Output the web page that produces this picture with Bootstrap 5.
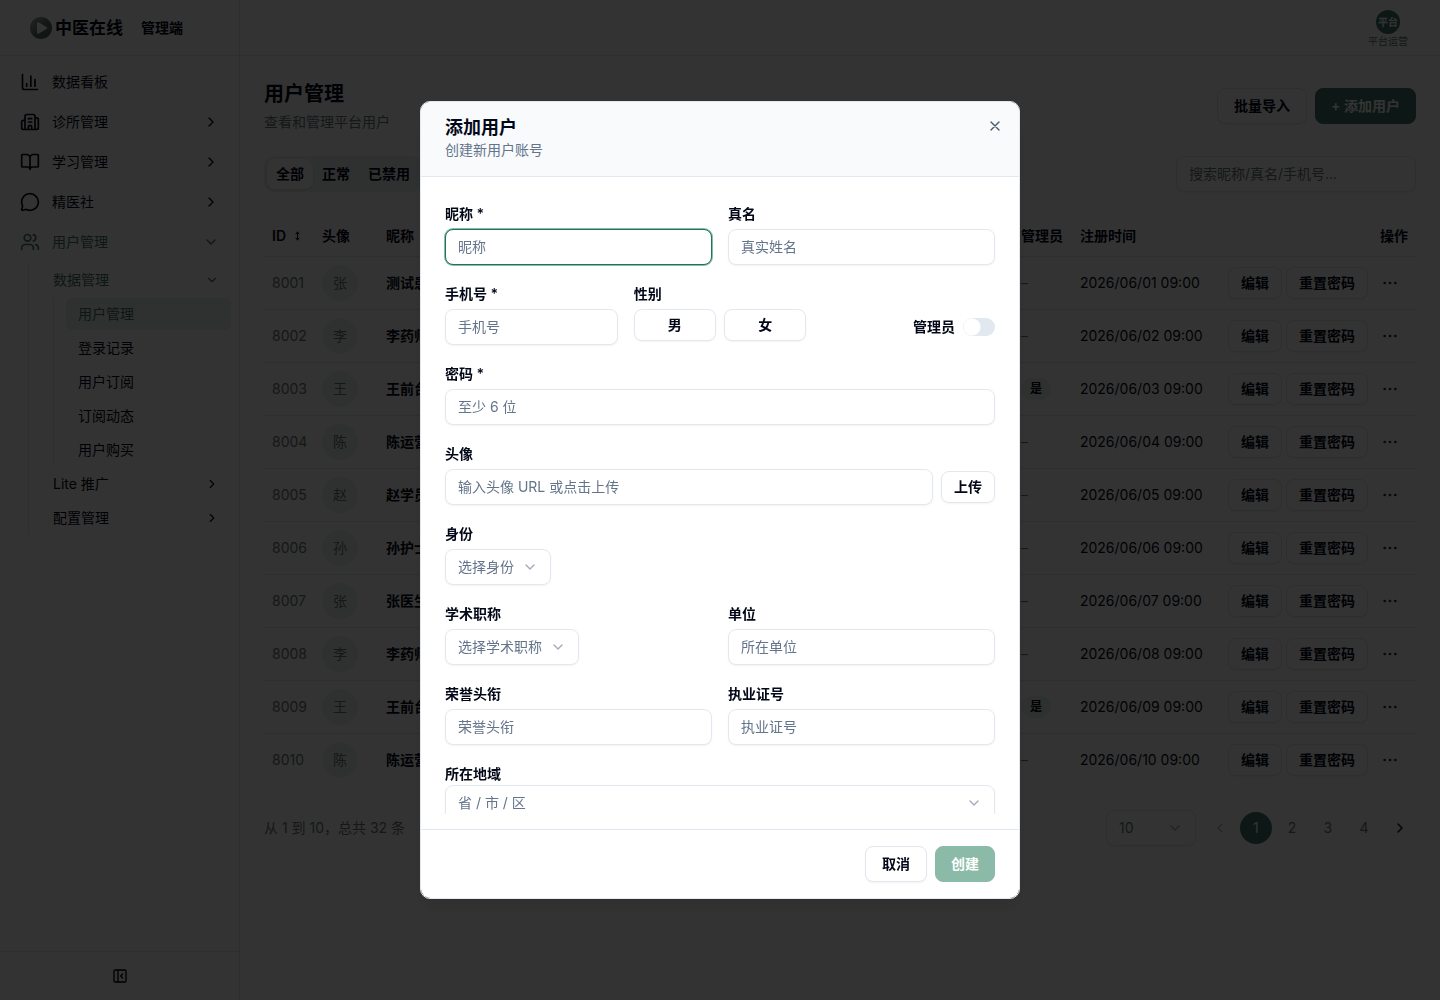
<!DOCTYPE html>
<html lang="zh-CN">
<head>
<meta charset="utf-8">
<meta name="viewport" content="width=device-width, initial-scale=1">
<title>用户管理 - 中医在线</title>
<link href="https://cdn.jsdelivr.net/npm/bootstrap@5.3.0/dist/css/bootstrap.min.css" rel="stylesheet">
<style>
:root{--ink:#020817;--soft:#64748b;--line:#e2e8f0;--tint:#eff6f4;--brand:#1b7755;--chev:url("data:image/svg+xml,%3Csvg xmlns='http://www.w3.org/2000/svg' viewBox='0 0 24 24' fill='none' stroke='%2364748b' stroke-opacity='.6' stroke-width='2' stroke-linecap='round' stroke-linejoin='round'%3E%3Cpath d='m6 9 6 6 6-6'/%3E%3C/svg%3E")}
body{font-family:Inter,"Noto Sans CJK SC",sans-serif;font-size:14px;line-height:20px;color:var(--ink);background:#fff;overflow:hidden}
.shell{--brand:#417568;--soft:#667876;--line:#dfe4e4;--tint:#ebf3f1}
a{color:inherit;text-decoration:none}
svg{flex:none;display:block}
.ico{fill:none;stroke:currentColor;stroke-width:2;stroke-linecap:round;stroke-linejoin:round}
.strong-text{font-weight:600}
.soft{color:var(--soft)}
.side{width:240px;border-right:1px solid var(--line)}
.side-head,.top-head{height:56px;border-bottom:1px solid var(--line)}
.side-head{padding-left:30px}
.brand-name{font-size:17px;font-weight:600;margin:0 18px 0 3px}
.side-foot{height:49px;border-top:1px solid var(--line)}
.menu{padding:6px 8px}
.menu-row{height:40px;padding:0 12px;gap:12px}
.menu-on{color:var(--brand)}
.sub-a{margin:2px 0 0 20px;border-left:1px solid var(--line)}
.sub-b{margin-left:24px;border-left:1px solid var(--line)}
.sub-list{row-gap:2px}
.sub-row{height:32px;padding:0 12px 0 24px;border-radius:6px}
.sub-b .sub-row{margin-left:12px;padding-left:12px}
.sub-sel{background:var(--tint);color:var(--brand)}
.top-head{padding-top:3px}
.me-pic{width:24px;height:24px;background:var(--brand);color:#fff;font-size:10px}
.me-name{font-size:10px;line-height:15px}
.page{padding:24px}
.title-lg{font-size:20px;line-height:28px;font-weight:600;margin:0 0 4px}
.btn{--bs-btn-font-size:14px;--bs-btn-line-height:20px;--bs-btn-border-radius:8px;--bs-btn-font-weight:600;--bs-btn-padding-y:7px;--bs-btn-padding-x:16px;white-space:nowrap}
.btn-line{--bs-btn-color:var(--ink);--bs-btn-bg:#fff;--bs-btn-border-color:var(--line);box-shadow:0 1px 2px rgba(0,0,0,.05)}
.btn-main{--bs-btn-color:#fff;--bs-btn-bg:var(--brand);--bs-btn-border-color:var(--brand);--bs-btn-disabled-color:#fff;--bs-btn-disabled-bg:var(--brand);--bs-btn-disabled-border-color:var(--brand);--bs-btn-disabled-opacity:.5;--bs-btn-padding-x:15px}
.btn-low{--bs-btn-padding-y:5px;--bs-btn-padding-x:12px}
.btn-dots{width:36px;height:32px}
.tabs-box{height:36px;padding:3px;background:var(--tint);border-radius:10px}
.tab-one{height:30px;padding:0 9px;border:0;border-radius:8px;background:none;color:var(--ink);font-weight:600}
.tab-sel{background:#fff;box-shadow:0 1px 3px rgba(0,0,0,.15)}
.form-control,.form-select{height:36px;font-size:14px;line-height:20px;padding:6px 12px 8px;border:1px solid var(--line);border-radius:8px;color:var(--ink);box-shadow:0 1px 2px rgba(0,0,0,.05)}
.form-control::placeholder{color:var(--soft);opacity:1}
.form-select{color:var(--soft);padding:7px 36px 7px 12px;background-image:var(--chev);background-position:right 12px center;background-size:16px 16px}
.in-focus{border-color:var(--brand);box-shadow:0 0 0 1px rgba(27,119,85,.5)}
.search-box{width:240px}
.users{table-layout:fixed;width:100%}
.users th,.users td{padding:0 8px;border-bottom:1px solid var(--line);white-space:nowrap;vertical-align:middle;overflow:hidden}
.users th{height:40px;font-weight:600}
.users td{height:53px}
.users tbody tr:last-child td{border-bottom:0}
.c-id{width:50px}.c-pic{width:64px}.c-adm{width:59px}.c-time{width:148px}.c-act{width:196px}
.pic{width:36px;height:36px;background:var(--tint);color:var(--soft)}
.yes-tag{display:inline-block;padding:1px 9px;font-size:12px;font-weight:600;border-radius:11px;background:var(--tint)}
.pager{width:32px;height:32px;border:0;background:none;color:var(--soft)}
.pager-on{background:var(--brand);color:#fff}
.pager-next{color:var(--ink)}
.size-pick{width:90px}
.modal-backdrop{--bs-backdrop-opacity:.8}
.modal-dialog{--bs-modal-width:600px;--bs-modal-margin:101px}
.modal-content{max-height:calc(100vh - 202px);border:1px solid var(--line);border-radius:10px;overflow:hidden;box-shadow:0 10px 15px -3px rgba(0,0,0,.1)}
.dlg-head{padding:14px 24px 16px;background:#f8fafc;border-bottom:1px solid var(--line)}
.dlg-title{font-size:18px;line-height:24px;font-weight:600;margin:0}
.dlg-close{top:16px;right:16px;width:16px;height:16px;padding:0;border:0;background:none;color:#4b5563}
.dlg-body{padding:0 24px 15px}
.dlg-scroll{overflow-y:auto;scrollbar-width:none;height:100%;padding:30px 1px 0;margin:0 -1px}
.fields{gap:22px}
.fields label{line-height:14px;font-weight:600}
.field{display:flex;flex-direction:column;gap:8px;flex:1 1 0;min-width:0}
.tight{gap:4px}
.fields .form-select{width:auto}
.fields .form-select.w-100{width:100%}
.admin-line{height:36px}
.switch-in{appearance:none;width:32px;height:18px;margin:0;border-radius:9px;background:radial-gradient(circle at 9px 9px,#fff 8px,transparent 9px) var(--line)}
.dlg-foot{padding:16px 24px;border-top:1px solid var(--line)}
</style>
<script src="https://cdn.jsdelivr.net/npm/bootstrap@5.3.0/dist/js/bootstrap.bundle.min.js"></script>
</head>
<body>
<div class="shell d-flex vh-100">
  <aside class="side d-flex flex-column flex-shrink-0">
    <div class="side-head d-flex align-items-center">
      <svg width="22" height="22" viewBox="0 0 22 22"><defs><linearGradient id="lg" x1="0" y1="0" x2="1" y2="1"><stop offset="0" stop-color="#a4b0ad"/><stop offset=".55" stop-color="#58736c"/><stop offset="1" stop-color="#3f665c"/></linearGradient></defs><circle cx="11" cy="11" r="11" fill="url(#lg)"/><path d="M8 6.2v9.6L16.2 11z" fill="#fff" stroke="#fff" stroke-width="2" stroke-linejoin="round"/></svg>
      <span class="brand-name">中医在线</span>
      <span class="strong-text">管理端</span>
    </div>
    <nav class="menu flex-grow-1">
      <a href="#" class="menu-row d-flex align-items-center"><svg class="ico" width="20" height="20" viewBox="0 0 24 24"><path d="M3 3v16a2 2 0 0 0 2 2h16M13 17V5M18 17V9M8 17v-3"/></svg><span>数据看板</span></a>
      <a href="#" class="menu-row d-flex align-items-center"><svg class="ico" width="20" height="20" viewBox="0 0 24 24"><path d="M10 12h4M10 8h4M14 21v-3a2 2 0 0 0-4 0v3M6 10H4a2 2 0 0 0-2 2v7a2 2 0 0 0 2 2h16a2 2 0 0 0 2-2V9a2 2 0 0 0-2-2h-2M6 21V5a2 2 0 0 1 2-2h8a2 2 0 0 1 2 2v16"/></svg><span class="flex-grow-1">诊所管理</span><svg class="ico" width="16" height="16" viewBox="0 0 24 24"><path d="m9 18 6-6-6-6"/></svg></a>
      <a href="#" class="menu-row d-flex align-items-center"><svg class="ico" width="20" height="20" viewBox="0 0 24 24"><path d="M12 7v14M3 18a1 1 0 0 1-1-1V4a1 1 0 0 1 1-1h5a4 4 0 0 1 4 4 4 4 0 0 1 4-4h5a1 1 0 0 1 1 1v13a1 1 0 0 1-1 1h-6a3 3 0 0 0-3 3 3 3 0 0 0-3-3z"/></svg><span class="flex-grow-1">学习管理</span><svg class="ico" width="16" height="16" viewBox="0 0 24 24"><path d="m9 18 6-6-6-6"/></svg></a>
      <a href="#" class="menu-row d-flex align-items-center"><svg class="ico" width="20" height="20" viewBox="0 0 24 24"><path d="M2.992 16.342a2 2 0 0 1 .094 1.167l-1.065 3.29a1 1 0 0 0 1.236 1.168l3.413-.998a2 2 0 0 1 1.099.092 10 10 0 1 0-4.777-4.719"/></svg><span class="flex-grow-1">精医社</span><svg class="ico" width="16" height="16" viewBox="0 0 24 24"><path d="m9 18 6-6-6-6"/></svg></a>
      <a href="#" class="menu-row menu-on d-flex align-items-center"><svg class="ico" width="20" height="20" viewBox="0 0 24 24"><path d="M16 21v-2a4 4 0 0 0-4-4H6a4 4 0 0 0-4 4v2M16 3.128a4 4 0 0 1 0 7.744M22 21v-2a4 4 0 0 0-3-3.87"/><circle cx="9" cy="7" r="4"/></svg><span class="flex-grow-1">用户管理</span><svg class="ico" width="16" height="16" viewBox="0 0 24 24"><path d="m6 9 6 6 6-6"/></svg></a>
      <div class="sub-a sub-list d-flex flex-column">
        <a href="#" class="sub-row menu-on d-flex align-items-center"><span class="flex-grow-1">数据管理</span><svg class="ico" width="14" height="14" viewBox="0 0 24 24"><path d="m6 9 6 6 6-6"/></svg></a>
        <div class="sub-b sub-list d-flex flex-column">
          <a href="#" class="sub-row sub-sel d-flex align-items-center">用户管理</a>
          <a href="#" class="sub-row d-flex align-items-center">登录记录</a>
          <a href="#" class="sub-row d-flex align-items-center">用户订阅</a>
          <a href="#" class="sub-row d-flex align-items-center">订阅动态</a>
          <a href="#" class="sub-row d-flex align-items-center">用户购买</a>
        </div>
        <a href="#" class="sub-row d-flex align-items-center"><span class="flex-grow-1">Lite 推广</span><svg class="ico" width="14" height="14" viewBox="0 0 24 24"><path d="m9 18 6-6-6-6"/></svg></a>
        <a href="#" class="sub-row d-flex align-items-center"><span class="flex-grow-1">配置管理</span><svg class="ico" width="14" height="14" viewBox="0 0 24 24"><path d="m9 18 6-6-6-6"/></svg></a>
      </div>
    </nav>
    <div class="side-foot d-flex align-items-center justify-content-center"><button type="button" class="border-0 bg-transparent p-0" aria-label="收起"><svg class="ico" width="16" height="16" viewBox="0 0 24 24"><rect x="3" y="3" width="18" height="18" rx="2"/><path d="M9 3v18M16 15l-3-3 3-3"/></svg></button></div>
  </aside>
  <div class="flex-grow-1">
    <header class="top-head d-flex justify-content-end align-items-center px-4">
      <div class="px-2 d-flex flex-column align-items-center"><span class="me-pic rounded-circle strong-text d-flex align-items-center justify-content-center">平台</span><span class="me-name soft">平台运营</span></div>
    </header>
    <main class="page">
      <div class="d-flex justify-content-between align-items-center mb-4">
        <div><h1 class="title-lg">用户管理</h1><div class="soft">查看和管理平台用户</div></div>
        <div class="d-flex gap-2"><button type="button" class="btn btn-line">批量导入</button><button type="button" class="btn btn-main">+ 添加用户</button></div>
      </div>
      <div class="d-flex justify-content-between mb-4">
        <div class="tabs-box d-flex"><button type="button" class="tab-one tab-sel">全部</button><button type="button" class="tab-one">正常</button><button type="button" class="tab-one">已禁用</button></div>
        <input type="search" class="form-control search-box" placeholder="搜索昵称/真名/手机号..." aria-label="搜索用户">
      </div>
      <table class="users">
        <thead><tr><th class="c-id"><span class="d-flex align-items-center gap-2">ID<svg class="ico" width="7" height="10" viewBox="0 0 7 10"><path stroke-width="1" d="M3.5 1v8M2 3l1.500-2L5 3M2 7l1.500 2L5 7"/></svg></span></th><th class="c-pic">头像</th><th>昵称</th><th class="c-adm">管理员</th><th class="c-time">注册时间</th><th class="c-act text-end">操作</th></tr></thead>
        <tbody id="rows"></tbody>
      </table>
      <div class="d-flex align-items-center justify-content-between mt-4">
        <span class="soft">从 1 到 10，总共 32 条</span>
        <div class="d-flex align-items-center gap-1">
          <select class="form-select size-pick me-1" aria-label="每页条数"><option>10</option></select>
          <button type="button" class="pager d-flex align-items-center justify-content-center opacity-50" aria-label="上一页"><svg class="ico" width="16" height="16" viewBox="0 0 24 24"><path d="m15 18-6-6 6-6"/></svg></button>
          <button type="button" class="pager pager-on rounded-circle">1</button><button type="button" class="pager">2</button><button type="button" class="pager">3</button><button type="button" class="pager">4</button>
          <button type="button" class="pager pager-next d-flex align-items-center justify-content-center" aria-label="下一页"><svg class="ico" width="16" height="16" viewBox="0 0 24 24"><path d="m9 18 6-6-6-6"/></svg></button>
        </div>
      </div>
    </main>
  </div>
</div>
<div class="modal-backdrop show"></div>
<div class="modal d-block" role="dialog" aria-labelledby="dlgTitle">
  <div class="modal-dialog modal-dialog-scrollable">
    <form class="modal-content">
      <div class="dlg-head position-relative"><h2 class="dlg-title" id="dlgTitle">添加用户</h2><div class="soft">创建新用户账号</div>
        <button type="button" class="dlg-close position-absolute" aria-label="关闭"><svg class="ico" width="16" height="16" viewBox="0 0 24 24"><path d="M18 6 6 18M6 6l12 12"/></svg></button></div>
      <div class="modal-body dlg-body overflow-hidden d-flex flex-column"><div class="dlg-scroll"><div class="fields d-flex flex-column">
        <div class="d-flex gap-3"><div class="field"><label for="nick">昵称 *</label><input id="nick" class="form-control in-focus" placeholder="昵称"></div><div class="field"><label for="real">真名</label><input id="real" class="form-control" placeholder="真实姓名"></div></div>
        <div class="d-flex gap-3"><div class="field"><label for="tel">手机号 *</label><input id="tel" type="tel" class="form-control" placeholder="手机号"></div>
          <div class="field" role="group" aria-label="性别"><label for="male">性别</label><div class="d-flex gap-2"><button id="male" type="button" class="btn btn-line btn-low flex-fill">男</button><button type="button" class="btn btn-line btn-low flex-fill">女</button></div></div>
          <div class="field justify-content-end"><div class="d-flex gap-2 align-items-center justify-content-end admin-line"><label for="adm">管理员</label><input id="adm" type="checkbox" role="switch" class="switch-in"></div></div></div>
        <div class="field"><label for="pwd">密码 *</label><input id="pwd" type="password" class="form-control" placeholder="至少 6 位"></div>
        <div class="field"><label for="ava">头像</label><div class="d-flex gap-2 align-items-center"><input id="ava" class="form-control" placeholder="输入头像 URL 或点击上传"><button type="button" class="btn btn-line btn-low">上传</button></div></div>
        <div class="field align-items-start"><label for="idn">身份</label><select id="idn" class="form-select"><option>选择身份</option></select></div>
        <div class="d-flex gap-3"><div class="field align-items-start"><label for="acad">学术职称</label><select id="acad" class="form-select"><option>选择学术职称</option></select></div><div class="field"><label for="org">单位</label><input id="org" class="form-control" placeholder="所在单位"></div></div>
        <div class="d-flex gap-3"><div class="field"><label for="hon">荣誉头衔</label><input id="hon" class="form-control" placeholder="荣誉头衔"></div><div class="field"><label for="lic">执业证号</label><input id="lic" class="form-control" placeholder="执业证号"></div></div>
        <div class="field tight"><label for="area">所在地域</label><select id="area" class="form-select w-100"><option>省 / 市 / 区</option></select></div>
      </div></div></div>
      <div class="dlg-foot d-flex justify-content-end gap-2"><button type="button" class="btn btn-line">取消</button><button type="submit" class="btn btn-main" disabled>创建</button></div>
    </form>
  </div>
</div>
<script>
const names=['测试患者','李药师','王前台','陈运营','赵学员','孙护士','张医生','李药师','王前台','陈运营'];
const pics=['张','李','王','陈','赵','孙','张','李','王','陈'];
document.getElementById('rows').innerHTML=names.map((n,i)=>{
  const d=String(i+1).padStart(2,'0');
  return `<tr><td class="soft">${8001+i}</td><td><span class="pic rounded-circle d-flex align-items-center justify-content-center">${pics[i]}</span></td><td class="strong-text">${n}</td><td>${i===2||i===8?'<span class="yes-tag">是</span>':'<span class="soft">–</span>'}</td><td>2026/06/${d} 09:00</td><td><div class="d-flex gap-1 justify-content-end"><button type="button" class="btn btn-line btn-low">编辑</button><button type="button" class="btn btn-line btn-low">重置密码</button><button type="button" class="btn btn-dots p-0 border-0 d-flex align-items-center justify-content-center" aria-label="更多"><svg width="16" height="16" viewBox="0 0 24 24" fill="currentColor"><circle cx="4" cy="12" r="2"/><circle cx="12" cy="12" r="2"/><circle cx="20" cy="12" r="2"/></svg></button></div></td></tr>`;
}).join('');
</script>
</body>
</html>
